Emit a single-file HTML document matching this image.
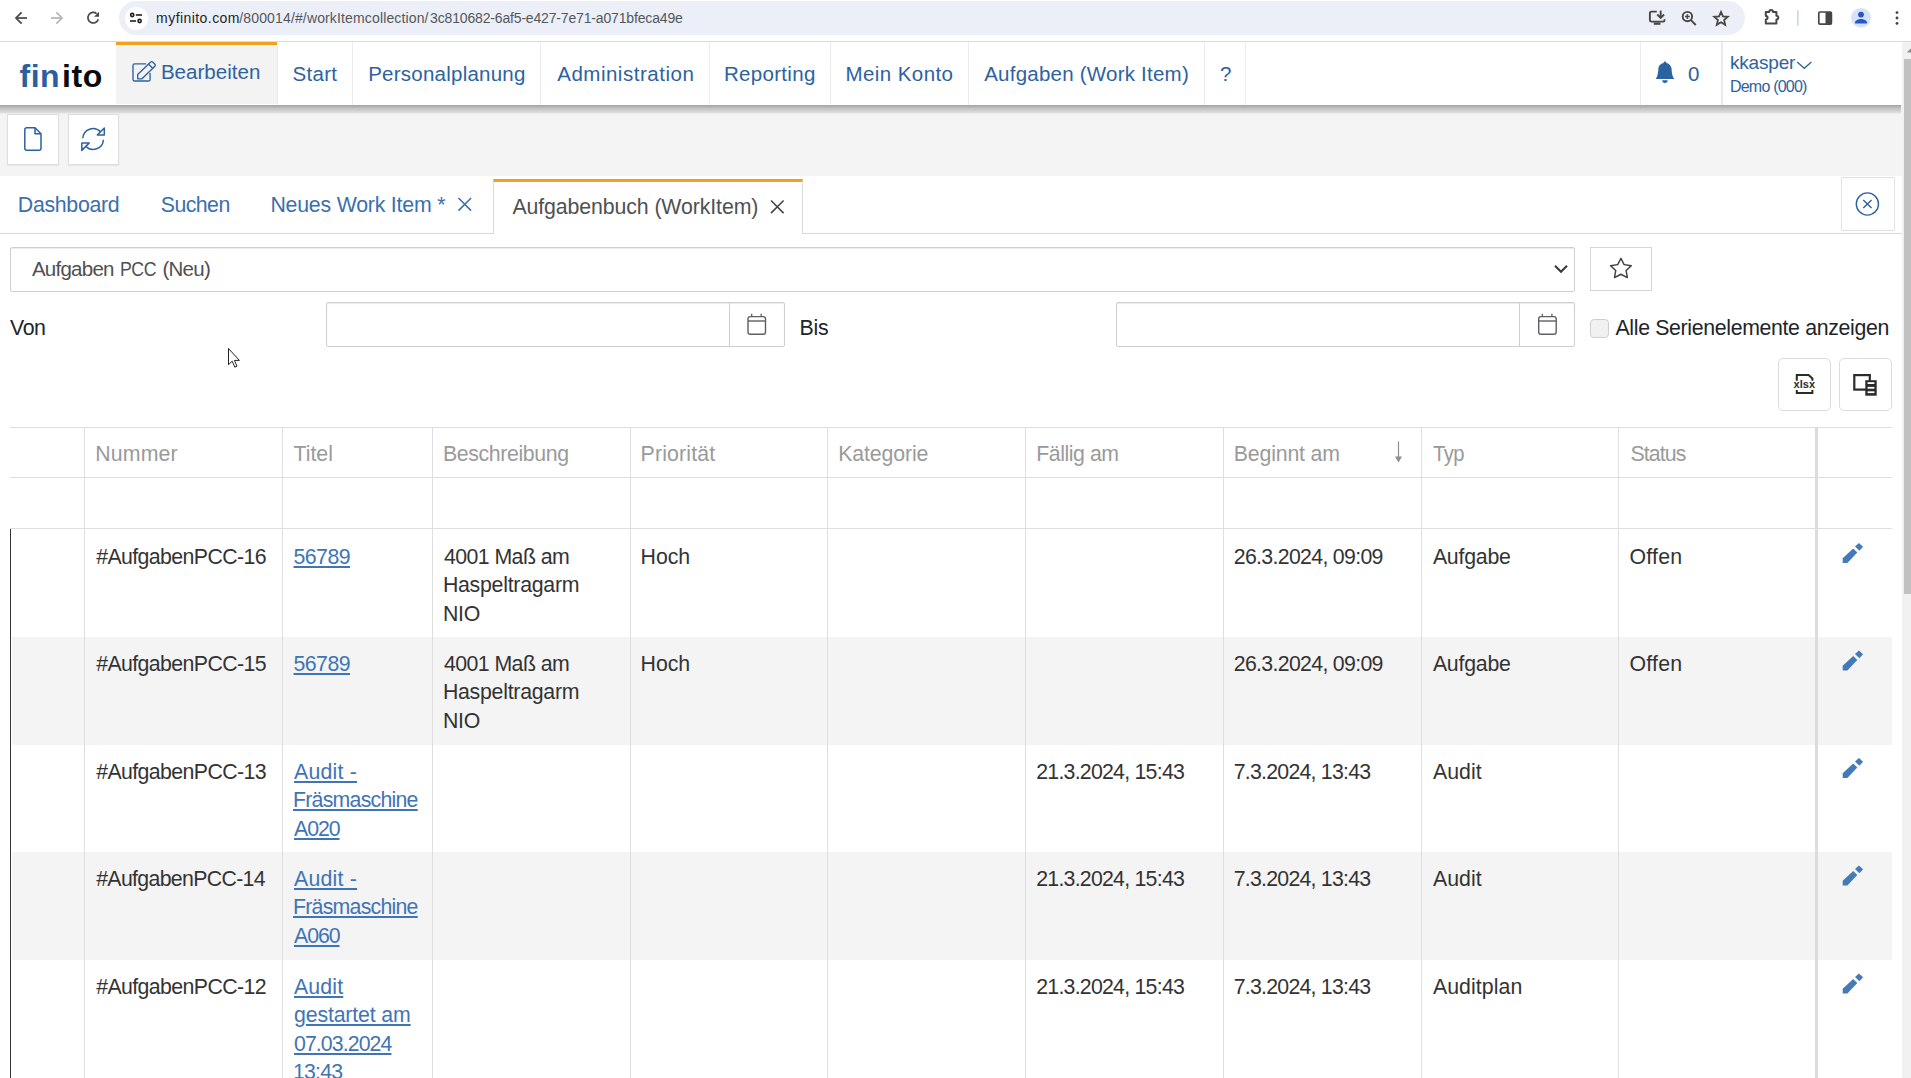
<!DOCTYPE html>
<html lang="de">
<head>
<meta charset="utf-8">
<title>finito</title>
<style>
*{box-sizing:border-box;margin:0;padding:0}
html,body{width:1911px;height:1078px;overflow:hidden;background:#fff;font-family:"Liberation Sans",sans-serif;}
body{position:relative}
.abs{position:absolute}
.t{position:absolute;white-space:nowrap;line-height:1;display:block;z-index:10}
.lnk{text-decoration:underline;text-decoration-thickness:1.700px;text-underline-offset:2.400px}
/* chrome */
#chrome{position:absolute;left:0;top:0;width:1911px;height:41px;background:#fff}
#pill{position:absolute;left:119px;top:1px;width:1626px;height:34px;border-radius:17px;background:#eceff7}
#pillc{position:absolute;left:124.5px;top:6.5px;width:23px;height:23px;border-radius:50%;background:#fff}
/* navbar */
#nav{position:absolute;left:0;top:41px;width:1901px;height:64px;background:#fff;border-top:1px solid #dcdcdc;z-index:5}
#navact{position:absolute;left:116px;top:0;width:160.700px;height:62px;background:#f3f3f3;border-top:3px solid #f0a21f}
.nsep{position:absolute;top:0;width:1px;height:63px;background:#eaecf0}
/* toolbar */
#tb{position:absolute;left:0;top:105px;width:1902px;height:71px;background:#f4f4f4}
#nsh{position:absolute;left:0;top:104.800px;width:1901px;height:9px;background:linear-gradient(to bottom,rgba(0,0,0,.33) 0,rgba(0,0,0,.2) 3.500px,rgba(0,0,0,.09) 7.800px,rgba(0,0,0,0) 9px);z-index:4}
.tbb{position:absolute;top:8.500px;width:51.600px;height:51px;background:#fff;border:1px solid #dedede;box-shadow:0 1px 1px rgba(0,0,0,.05)}
/* tabs */
#tabs{position:absolute;left:0;top:175.5px;width:1902px;height:58px;background:#fff;border-bottom:1px solid #d9d9d9}
#tabact{position:absolute;left:493px;top:3px;width:310px;height:55.5px;background:#fff;border:1px solid #d9d9d9;border-top:3px solid #f0a21f;border-bottom:0}
#closeall{position:absolute;left:1841px;top:1.5px;width:54px;height:54px;border:1px solid #e2e2e2;background:#fff}
/* form */
.inp{position:absolute;background:#fff;border:1px solid #cfcfcf;border-radius:2px;box-shadow:inset 0 1px 1px rgba(0,0,0,.08)}
.btn{position:absolute;background:#fff;border:1px solid #d6d6d6}
/* table */
.hl{position:absolute;height:1px;background:#dedede}
.vl{position:absolute;width:1px;background:#dedede}
.alt{position:absolute;left:12px;width:1880px;background:#f4f4f4}
/* scrollbar */
#sbt{position:absolute;left:1901.500px;top:42px;width:9.500px;height:1036px;background:#f1f1f1;z-index:6}
#sbh{position:absolute;left:1904px;top:59px;width:7px;height:535px;background:#c1c1c1;z-index:7}
</style>
</head>
<body>
<!-- ===== browser chrome ===== -->
<div id="chrome">
  <div id="pill"></div><div id="pillc"></div>
  <svg class="abs" style="left:0;top:0" width="1911" height="41" viewBox="0 0 1911 41" fill="none">
    <!-- back -->
    <g stroke="#444746" stroke-width="1.7" stroke-linecap="butt" stroke-linejoin="miter">
      <path d="M27 18H16.5"/><path d="M21.6 12.4L16 18l5.6 5.6"/>
    </g>
    <!-- forward -->
    <g stroke="#b5b5b5" stroke-width="1.7">
      <path d="M51 18H61.5"/><path d="M56.4 12.4L62 18l-5.6 5.6"/>
    </g>
    <!-- reload -->
    <g stroke="#444746" stroke-width="1.7">
      <path d="M98.3 19.2A5.3 5.3 0 1 1 96.6 13.6"/>
    </g>
    <path d="M99 11.8v4.9h-4.9z" fill="#444746"/>
    <!-- tune -->
    <g stroke="#1f1f1f" stroke-width="1.6">
      <circle cx="132.2" cy="15" r="1.6"/><path d="M135.8 15H142"/>
      <circle cx="139.6" cy="21" r="1.6"/><path d="M130 21H136"/>
    </g>
    <!-- install -->
    <g stroke="#474747" stroke-width="1.900">
      <path d="M1656.800 11.600H1651.200a1.300 1.300 0 0 0-1.300 1.300v7.400a1.300 1.300 0 0 0 1.300 1.300h12a1.300 1.300 0 0 0 1.300-1.300V19.200"/>
      <path d="M1660.700 10.600v6.800"/><path d="M1657.300 14.500l3.400 3.400 3.400-3.400"/>
    </g>
    <rect x="1653.800" y="22.500" width="6.600" height="2.300" fill="#474747"/>
    <!-- zoom -->
    <g stroke="#474747" stroke-width="1.900">
      <circle cx="1687.400" cy="16.600" r="4.700"/><path d="M1690.900 20.100l4.900 4.900"/>
    </g>
    <path d="M1685 16.600h4.800M1687.400 14.200v4.800" stroke="#474747" stroke-width="1.500"/>
    <!-- star -->
    <path d="M1721 11.900l1.950 4.450 4.800.45-3.650 3.200 1.100 4.750-4.200-2.550-4.200 2.550 1.100-4.750-3.650-3.200 4.800-.45z" stroke="#474747" stroke-width="1.800" stroke-linejoin="miter"/>
    <!-- puzzle -->
    <path d="M1765.800 12h3.400a1.900 1.900 0 0 1 3.800 0h3.400v3.700a1.900 1.900 0 0 1 0 3.800v3.900h-10.600v-3.900a1.800 1.800 0 0 0 0-3.600z" stroke="#474747" stroke-width="2" stroke-linejoin="round"/>
    <!-- divider -->
    <rect x="1797" y="10.200" width="1.600" height="15.600" fill="#c7d6f3"/>
    <!-- side panel -->
    <rect x="1818.800" y="12" width="12.600" height="12.200" rx="1.200" stroke="#444746" stroke-width="1.700"/>
    <rect x="1825.500" y="12" width="6" height="12.200" fill="#444746"/>
    <!-- avatar -->
    <circle cx="1861" cy="17.800" r="9.900" fill="#d6e2fb"/>
    <circle cx="1861" cy="14.600" r="2.900" fill="#2456c7"/>
    <path d="M1855 22.800c0-2.700 3.600-3.800 6-3.800s6 1.100 6 3.800v.7h-12z" fill="#2456c7"/>
    <!-- menu -->
    <circle cx="1897" cy="12.600" r="1.450" fill="#444746"/><circle cx="1897" cy="18" r="1.450" fill="#444746"/><circle cx="1897" cy="23.400" r="1.450" fill="#444746"/>
  </svg>
</div>

<!-- ===== navbar ===== -->
<div class="abs" style="left:0;top:41px;width:1911px;height:1px;background:#dcdcdc;z-index:9"></div>
<div id="nav">
  <div id="navact"></div>
  <div class="nsep" style="left:277px"></div>
  <div class="nsep" style="left:352px"></div>
  <div class="nsep" style="left:540px"></div>
  <div class="nsep" style="left:709px"></div>
  <div class="nsep" style="left:830px"></div>
  <div class="nsep" style="left:968px"></div>
  <div class="nsep" style="left:1204px"></div>
  <div class="nsep" style="left:1245px"></div>
  <div class="nsep" style="left:1640px"></div>
  <div class="nsep" style="left:1721px;width:1.500px;background:#e9e9ec"></div>
</div>
<svg class="abs" style="left:0;top:41px;z-index:6" width="1901" height="64" viewBox="0 41 1901 64" fill="none">
  <!-- edit icon -->
  <g stroke="#2d62a0" stroke-width="1.350" stroke-linejoin="round" stroke-linecap="round">
    <path d="M145.600 63.900H134.600a1.600 1.600 0 0 0-1.600 1.600V79.400a1.600 1.600 0 0 0 1.600 1.600h13.900a1.600 1.600 0 0 0 1.600-1.600V73.500"/>
    <path d="M137.700 74.500L150.700 62a1.400 1.400 0 0 1 2 0l2.200 2.200a1.400 1.400 0 0 1 0 2L142 78.800H137.700z"/>
    <path d="M148.600 64.200l3.900 3.900"/>
  </g>
  <!-- bell -->
  <g transform="translate(1654.300 61.600) scale(1.333)" fill="#2d62a0">
    <path d="M8 16a2 2 0 0 0 2-2H6a2 2 0 0 0 2 2zm.995-14.901a1 1 0 1 0-1.990 0A5.002 5.002 0 0 0 3 6c0 1.098-.500 6-2 7h14c-1.500-1-2-5.902-2-7 0-2.420-1.720-4.440-4.005-4.901z"/>
  </g>
  <!-- user chevron -->
  <path d="M1797.200 62l7.100 6.300 7.100-6.300" stroke="#2d62a0" stroke-width="1.300"/>
</svg>

<!-- ===== toolbar ===== -->
<div id="nsh"></div>
<div id="tb">
  <div class="tbb" style="left:7.200px"></div>
  <div class="tbb" style="left:67.500px"></div>
  <svg class="abs" style="left:0;top:0" width="200" height="71" viewBox="0 105 200 71" fill="none">
    <g stroke="#2d62a0" stroke-width="1.500" stroke-linejoin="round">
      <path d="M35 127.700H26.800a2 2 0 0 0-2 2V148.300a2 2 0 0 0 2 2H39a2 2 0 0 0 2-2V133.700z"/>
      <path d="M35 127.700V133.700H41"/>
    </g>
    <g stroke="#2d62a0" stroke-width="1.500" stroke-linejoin="round">
      <path d="M82.800 138.300A10.300 10.300 0 0 1 100.500 131.700"/>
      <path d="M104.300 128V135H97.300z"/>
      <path d="M103.400 139.700A10.300 10.300 0 0 1 85.700 146.300"/>
      <path d="M81.800 150.400V142.900H89.300z"/>
    </g>
  </svg>
</div>

<!-- ===== tab strip ===== -->
<div id="tabs">
  <div id="tabact"></div>
  <div id="closeall"></div>
</div>
<svg class="abs" style="left:0;top:176px" width="1902" height="58" viewBox="0 176 1902 58" fill="none">
  <path d="M458.500 198l12.600 12.600M471.100 198l-12.600 12.600" stroke="#3a6fb0" stroke-width="1.500"/>
  <path d="M771 200.500l12.600 12.600M783.600 200.500L771 213.100" stroke="#3d4349" stroke-width="1.500"/>
  <circle cx="1867.400" cy="204" r="11.100" stroke="#2d62a0" stroke-width="1.400"/>
  <path d="M1863.300 199.900l8.200 8.200M1871.500 199.900l-8.200 8.200" stroke="#2d62a0" stroke-width="1.400"/>
</svg>

<!-- ===== form ===== -->
<div class="inp" style="left:10px;top:247px;width:1565px;height:45px"></div>
<div class="btn" style="left:1590px;top:247px;width:62px;height:44px"></div>
<div class="inp" style="left:326px;top:302px;width:459px;height:45px"></div>
<div class="vl" style="left:729px;top:303px;height:43px;background:#cfcfcf"></div>
<div class="inp" style="left:1116px;top:302px;width:459px;height:45px"></div>
<div class="vl" style="left:1519px;top:303px;height:43px;background:#cfcfcf"></div>
<div class="abs" style="left:1590px;top:319px;width:19px;height:19px;border:1px solid #cfcfcf;border-radius:4px;background:#f1f1f1"></div>
<div class="btn" style="left:1778px;top:358px;width:53px;height:53px;border-radius:5px;border-color:#dcdcdc"></div>
<div class="btn" style="left:1839px;top:358px;width:53px;height:53px;border-radius:5px;border-color:#dcdcdc"></div>
<svg class="abs" style="left:0;top:240px" width="1902" height="180" viewBox="0 240 1902 180" fill="none">
  <!-- select chevron -->
  <path d="M1555 265.800l6 6 6-6" stroke="#343a40" stroke-width="2"/>
  <!-- star -->
  <g transform="translate(1609.800 256.800) scale(1.390)" fill="#3d4349">
    <path d="M2.866 14.850c-.078.444.360.791.746.593l4.390-2.256 4.389 2.256c.386.198.824-.149.746-.592l-.830-4.730 3.522-3.356c.330-.314.160-.888-.282-.950l-4.898-.696L8.465.792a.513.513 0 0 0-.927 0L5.354 5.120l-4.898.696c-.441.062-.612.636-.283.950l3.523 3.356-.830 4.730zm4.905-2.767-3.686 1.894.694-3.957a.565.565 0 0 0-.163-.505L1.710 6.745l4.052-.576a.525.525 0 0 0 .393-.288L8 2.223l1.847 3.658a.525.525 0 0 0 .393.288l4.052.575-2.906 2.770a.565.565 0 0 0-.163.506l.694 3.957-3.686-1.894a.503.503 0 0 0-.461 0z"/>
  </g>
  <!-- calendars -->
  <g id="cal" stroke="#5c5f63" stroke-width="1.400" fill="none">
    <rect x="1538.700" y="316.600" width="17.500" height="17.600" rx="2.200"/>
    <path d="M1538.700 321H1556.200"/>
    <path d="M1542.400 313.700V316.600M1551.900 313.700V316.600" stroke-width="1.300"/>
  </g>
  <use href="#cal" x="-790.700"/>
  <!-- mouse cursor -->
  <path d="M228.500 348.500v16.200l3.700-3.500 2.600 6 2.200-1-2.600-5.800h5z" fill="#fff" stroke="#222" stroke-width="1"/>
  <!-- xlsx icon -->
  <g fill="none" stroke="#2b2b2b" stroke-width="2" stroke-linejoin="miter">
    <path d="M1796.800 380.800V375H1808.600L1812.400 378.400V380.800"/>
    <path d="M1796.800 390.100V393H1812.400V390.100"/>
  </g>
  <!-- column chooser icon -->
  <rect x="1854.300" y="375.100" width="15.500" height="14.500" fill="none" stroke="#2b2b2b" stroke-width="2.200"/>
  <rect x="1865.300" y="380.200" width="11.400" height="15.500" fill="#2b2b2b"/>
  <rect x="1867.600" y="382.200" width="6.800" height="1.800" fill="#fff"/>
  <rect x="1867.600" y="386.900" width="6.800" height="1.800" fill="#fff"/>
  <rect x="1867.600" y="391.300" width="6.800" height="1.800" fill="#fff"/>
</svg>
<div class="t" style="left:1793.600px;top:379.300px;font-size:11px;font-weight:bold;color:#2b2b2b;letter-spacing:0.050px">xlsx</div>

<!-- ===== grid ===== -->
<div class="alt" style="top:637px;height:108px"></div>
<div class="alt" style="top:852px;height:108px"></div>
<div class="hl" style="left:10px;top:427px;width:1882px"></div>
<div class="hl" style="left:10px;top:477px;width:1882px"></div>
<div class="hl" style="left:10px;top:528px;width:1882px"></div>
<div class="vl" style="left:84px;top:428px;height:650px"></div>
<div class="vl" style="left:282px;top:428px;height:650px"></div>
<div class="vl" style="left:432px;top:428px;height:650px"></div>
<div class="vl" style="left:630px;top:428px;height:650px"></div>
<div class="vl" style="left:827px;top:428px;height:650px"></div>
<div class="vl" style="left:1025px;top:428px;height:650px"></div>
<div class="vl" style="left:1223px;top:428px;height:650px"></div>
<div class="vl" style="left:1421px;top:428px;height:650px"></div>
<div class="vl" style="left:1618px;top:428px;height:650px"></div>
<div class="vl" style="left:1815px;top:428px;height:650px;width:3px;background:#dcdcdc"></div>
<div class="vl" style="left:10px;top:529px;height:549px;background:#333338"></div>
<svg class="abs" style="left:1380px;top:430px" width="520" height="648" viewBox="1380 430 520 648" fill="none">
  <!-- sort arrow -->
  <path d="M1398.500 441.500v16" stroke="#8e8e8e" stroke-width="1.200"/><path d="M1395 456.400h7l-3.500 6z" fill="#8e8e8e"/>
  <!-- pencils -->
  <g id="pen" fill="#457ab8">
    <path d="M1842.700 558.300L1853.200 548.600L1857.300 552.500L1847.400 563H1842.700z"/>
    <path d="M1855 546.500L1858.900 542.900L1863.100 546.700L1859.400 550.800z"/>
  </g>
  <use href="#pen" y="107.500"/>
  <use href="#pen" y="215"/>
  <use href="#pen" y="322.500"/>
  <use href="#pen" y="430.500"/>
</svg>

<!-- ===== scrollbar ===== -->
<div id="sbt"></div><div id="sbh"></div>
<svg class="abs" style="left:1901px;top:44px;z-index:8" width="10" height="12" viewBox="0 0 10 12"><path d="M5.800 8.600L9.800 4.600L13.800 8.600z" fill="#8c8c8c"/></svg>

<div class="t" style="left:156.10px;top:11px;font-size:14px;color:#1f1f1f;letter-spacing:0.435px">myfinito.com</div>
<div class="t" style="left:239.30px;top:11px;font-size:14px;color:#53575c;letter-spacing:0.142px">/800014/#/workItemcollection/</div>
<div class="t" style="left:430.10px;top:11px;font-size:14px;color:#53575c;letter-spacing:-0.164px">3c810682-6af5-e427-7e71-a071bfeca49e</div>
<div class="t" style="left:19.60px;top:60px;font-size:32px;color:#2c5fa0;letter-spacing:0.427px;font-weight:bold">fin</div>
<div class="t" style="left:62.00px;top:60px;font-size:32px;color:#0a0a0a;letter-spacing:0.627px;font-weight:bold">ito</div>
<div class="t" style="left:160.90px;top:62px;font-size:20.5px;color:#2d62a0;letter-spacing:0.038px">Bearbeiten</div>
<div class="t" style="left:292.60px;top:64px;font-size:20.5px;color:#2d62a0;letter-spacing:0.276px">Start</div>
<div class="t" style="left:368.20px;top:64px;font-size:20.5px;color:#2d62a0;letter-spacing:0.238px">Personalplanung</div>
<div class="t" style="left:557.20px;top:64px;font-size:20.5px;color:#2d62a0;letter-spacing:0.516px">Administration</div>
<div class="t" style="left:723.90px;top:64px;font-size:20.5px;color:#2d62a0;letter-spacing:0.314px">Reporting</div>
<div class="t" style="left:845.50px;top:64px;font-size:20.5px;color:#2d62a0;letter-spacing:0.422px">Mein Konto</div>
<div class="t" style="left:984.20px;top:64px;font-size:20.5px;color:#2d62a0;letter-spacing:0.231px">Aufgaben (Work Item)</div>
<div class="t" style="left:1220.00px;top:64px;font-size:20.5px;color:#2d62a0;letter-spacing:0.000px">?</div>
<div class="t" style="left:1687.90px;top:64px;font-size:20.5px;color:#2d62a0;letter-spacing:0.000px">0</div>
<div class="t" style="left:1730.00px;top:53px;font-size:19px;color:#2d62a0;letter-spacing:-0.200px">kkasper</div>
<div class="t" style="left:1730.00px;top:79px;font-size:16px;color:#2d62a0;letter-spacing:-0.794px">Demo (000)</div>
<div class="t" style="left:17.80px;top:195px;font-size:21.3px;color:#3a6fb0;letter-spacing:-0.293px">Dashboard</div>
<div class="t" style="left:160.80px;top:195px;font-size:21.3px;color:#3a6fb0;letter-spacing:-0.557px">Suchen</div>
<div class="t" style="left:270.40px;top:195px;font-size:21.3px;color:#3a6fb0;letter-spacing:-0.202px">Neues Work Item *</div>
<div class="t" style="left:512.40px;top:197px;font-size:21.3px;color:#4f5052;letter-spacing:-0.100px">Aufgabenbuch (WorkItem)</div>
<div class="t" style="left:31.90px;top:259px;font-size:20.5px;color:#4f5052;letter-spacing:-0.739px">Aufgaben</div>
<div class="t" style="left:120.14px;top:259px;font-size:20.5px;color:#4f5052;letter-spacing:-0.500px;transform:scaleX(0.8631);transform-origin:0 0">PCC</div>
<div class="t" style="left:162.40px;top:259px;font-size:20.5px;color:#4f5052;letter-spacing:-0.733px">(Neu)</div>
<div class="t" style="left:10.00px;top:318px;font-size:21.3px;color:#212529;letter-spacing:-0.387px">Von</div>
<div class="t" style="left:799.50px;top:318px;font-size:21.3px;color:#212529;letter-spacing:-0.218px">Bis</div>
<div class="t" style="left:1615.50px;top:318px;font-size:21.3px;color:#212529;letter-spacing:-0.341px">Alle Serienelemente anzeigen</div>
<div class="t" style="left:95.20px;top:444px;font-size:21.3px;color:#9a9a9a;letter-spacing:0.170px">Nummer</div>
<div class="t" style="left:293.50px;top:444px;font-size:21.3px;color:#9a9a9a;letter-spacing:-0.003px">Titel</div>
<div class="t" style="left:442.90px;top:444px;font-size:21.3px;color:#9a9a9a;letter-spacing:-0.372px">Beschreibung</div>
<div class="t" style="left:640.60px;top:444px;font-size:21.3px;color:#9a9a9a;letter-spacing:0.143px">Priorität</div>
<div class="t" style="left:838.20px;top:444px;font-size:21.3px;color:#9a9a9a;letter-spacing:-0.115px">Kategorie</div>
<div class="t" style="left:1036.20px;top:444px;font-size:21.3px;color:#9a9a9a;letter-spacing:-0.444px">Fällig am</div>
<div class="t" style="left:1233.80px;top:444px;font-size:21.3px;color:#9a9a9a;letter-spacing:-0.166px">Beginnt am</div>
<div class="t" style="left:1432.90px;top:444px;font-size:21.3px;color:#9a9a9a;letter-spacing:-0.500px;transform:scaleX(0.9482);transform-origin:0 0">Typ</div>
<div class="t" style="left:1630.50px;top:444px;font-size:21.3px;color:#9a9a9a;letter-spacing:-0.905px">Status</div>
<div class="t" style="left:96.20px;top:547px;font-size:21.3px;color:#333333;letter-spacing:-0.595px">#AufgabenPCC-16</div>
<div class="t" style="left:96.20px;top:654px;font-size:21.3px;color:#333333;letter-spacing:-0.595px">#AufgabenPCC-15</div>
<div class="t" style="left:96.20px;top:762px;font-size:21.3px;color:#333333;letter-spacing:-0.595px">#AufgabenPCC-13</div>
<div class="t" style="left:96.20px;top:869px;font-size:21.3px;color:#333333;letter-spacing:-0.667px">#AufgabenPCC-14</div>
<div class="t" style="left:96.20px;top:977px;font-size:21.3px;color:#333333;letter-spacing:-0.595px">#AufgabenPCC-12</div>
<div class="t lnk" style="left:293.50px;top:547px;font-size:21.3px;color:#3f74b6;letter-spacing:-0.544px">56789</div>
<div class="t" style="left:443.90px;top:547px;font-size:21.3px;color:#333333;letter-spacing:-0.555px">4001 Maß am</div>
<div class="t" style="left:442.90px;top:575px;font-size:21.3px;color:#333333;letter-spacing:-0.252px">Haspeltragarm</div>
<div class="t" style="left:442.90px;top:604px;font-size:21.3px;color:#333333;letter-spacing:-0.198px">NIO</div>
<div class="t" style="left:640.60px;top:547px;font-size:21.3px;color:#333333;letter-spacing:-0.058px">Hoch</div>
<div class="t" style="left:1233.80px;top:547px;font-size:21.3px;color:#333333;letter-spacing:-0.682px">26.3.2024, 09:09</div>
<div class="t" style="left:1432.90px;top:547px;font-size:21.3px;color:#333333;letter-spacing:-0.233px">Aufgabe</div>
<div class="t" style="left:1629.50px;top:547px;font-size:21.3px;color:#333333;letter-spacing:0.235px">Offen</div>
<div class="t lnk" style="left:293.50px;top:654px;font-size:21.3px;color:#3f74b6;letter-spacing:-0.544px">56789</div>
<div class="t" style="left:443.90px;top:654px;font-size:21.3px;color:#333333;letter-spacing:-0.555px">4001 Maß am</div>
<div class="t" style="left:442.90px;top:682px;font-size:21.3px;color:#333333;letter-spacing:-0.252px">Haspeltragarm</div>
<div class="t" style="left:442.90px;top:711px;font-size:21.3px;color:#333333;letter-spacing:-0.198px">NIO</div>
<div class="t" style="left:640.60px;top:654px;font-size:21.3px;color:#333333;letter-spacing:-0.058px">Hoch</div>
<div class="t" style="left:1233.80px;top:654px;font-size:21.3px;color:#333333;letter-spacing:-0.682px">26.3.2024, 09:09</div>
<div class="t" style="left:1432.90px;top:654px;font-size:21.3px;color:#333333;letter-spacing:-0.233px">Aufgabe</div>
<div class="t" style="left:1629.50px;top:654px;font-size:21.3px;color:#333333;letter-spacing:0.235px">Offen</div>
<div class="t lnk" style="left:294.00px;top:762px;font-size:21.3px;color:#3f74b6;letter-spacing:0.224px">Audit -</div>
<div class="t lnk" style="left:293.00px;top:790px;font-size:21.3px;color:#3f74b6;letter-spacing:-0.754px">Fräsmaschine</div>
<div class="t lnk" style="left:294.00px;top:819px;font-size:21.3px;color:#3f74b6;letter-spacing:-1.064px">A020</div>
<div class="t" style="left:1036.20px;top:762px;font-size:21.3px;color:#333333;letter-spacing:-0.749px">21.3.2024, 15:43</div>
<div class="t" style="left:1233.80px;top:762px;font-size:21.3px;color:#333333;letter-spacing:-0.770px">7.3.2024, 13:43</div>
<div class="t" style="left:1432.90px;top:762px;font-size:21.3px;color:#333333;letter-spacing:0.044px">Audit</div>
<div class="t lnk" style="left:294.00px;top:869px;font-size:21.3px;color:#3f74b6;letter-spacing:0.224px">Audit -</div>
<div class="t lnk" style="left:293.00px;top:897px;font-size:21.3px;color:#3f74b6;letter-spacing:-0.754px">Fräsmaschine</div>
<div class="t lnk" style="left:294.00px;top:926px;font-size:21.3px;color:#3f74b6;letter-spacing:-1.064px">A060</div>
<div class="t" style="left:1036.20px;top:869px;font-size:21.3px;color:#333333;letter-spacing:-0.749px">21.3.2024, 15:43</div>
<div class="t" style="left:1233.80px;top:869px;font-size:21.3px;color:#333333;letter-spacing:-0.770px">7.3.2024, 13:43</div>
<div class="t" style="left:1432.90px;top:869px;font-size:21.3px;color:#333333;letter-spacing:0.044px">Audit</div>
<div class="t lnk" style="left:294.00px;top:977px;font-size:21.3px;color:#3f74b6;letter-spacing:0.144px">Audit</div>
<div class="t lnk" style="left:294.00px;top:1005px;font-size:21.3px;color:#3f74b6;letter-spacing:-0.148px">gestartet am</div>
<div class="t lnk" style="left:294.00px;top:1034px;font-size:21.3px;color:#3f74b6;letter-spacing:-0.916px">07.03.2024</div>
<div class="t lnk" style="left:293.00px;top:1062px;font-size:21.3px;color:#3f74b6;letter-spacing:-0.812px">13:43</div>
<div class="t" style="left:1036.20px;top:977px;font-size:21.3px;color:#333333;letter-spacing:-0.749px">21.3.2024, 15:43</div>
<div class="t" style="left:1233.80px;top:977px;font-size:21.3px;color:#333333;letter-spacing:-0.770px">7.3.2024, 13:43</div>
<div class="t" style="left:1432.90px;top:977px;font-size:21.3px;color:#333333;letter-spacing:0.080px">Auditplan</div>
</body>
</html>
